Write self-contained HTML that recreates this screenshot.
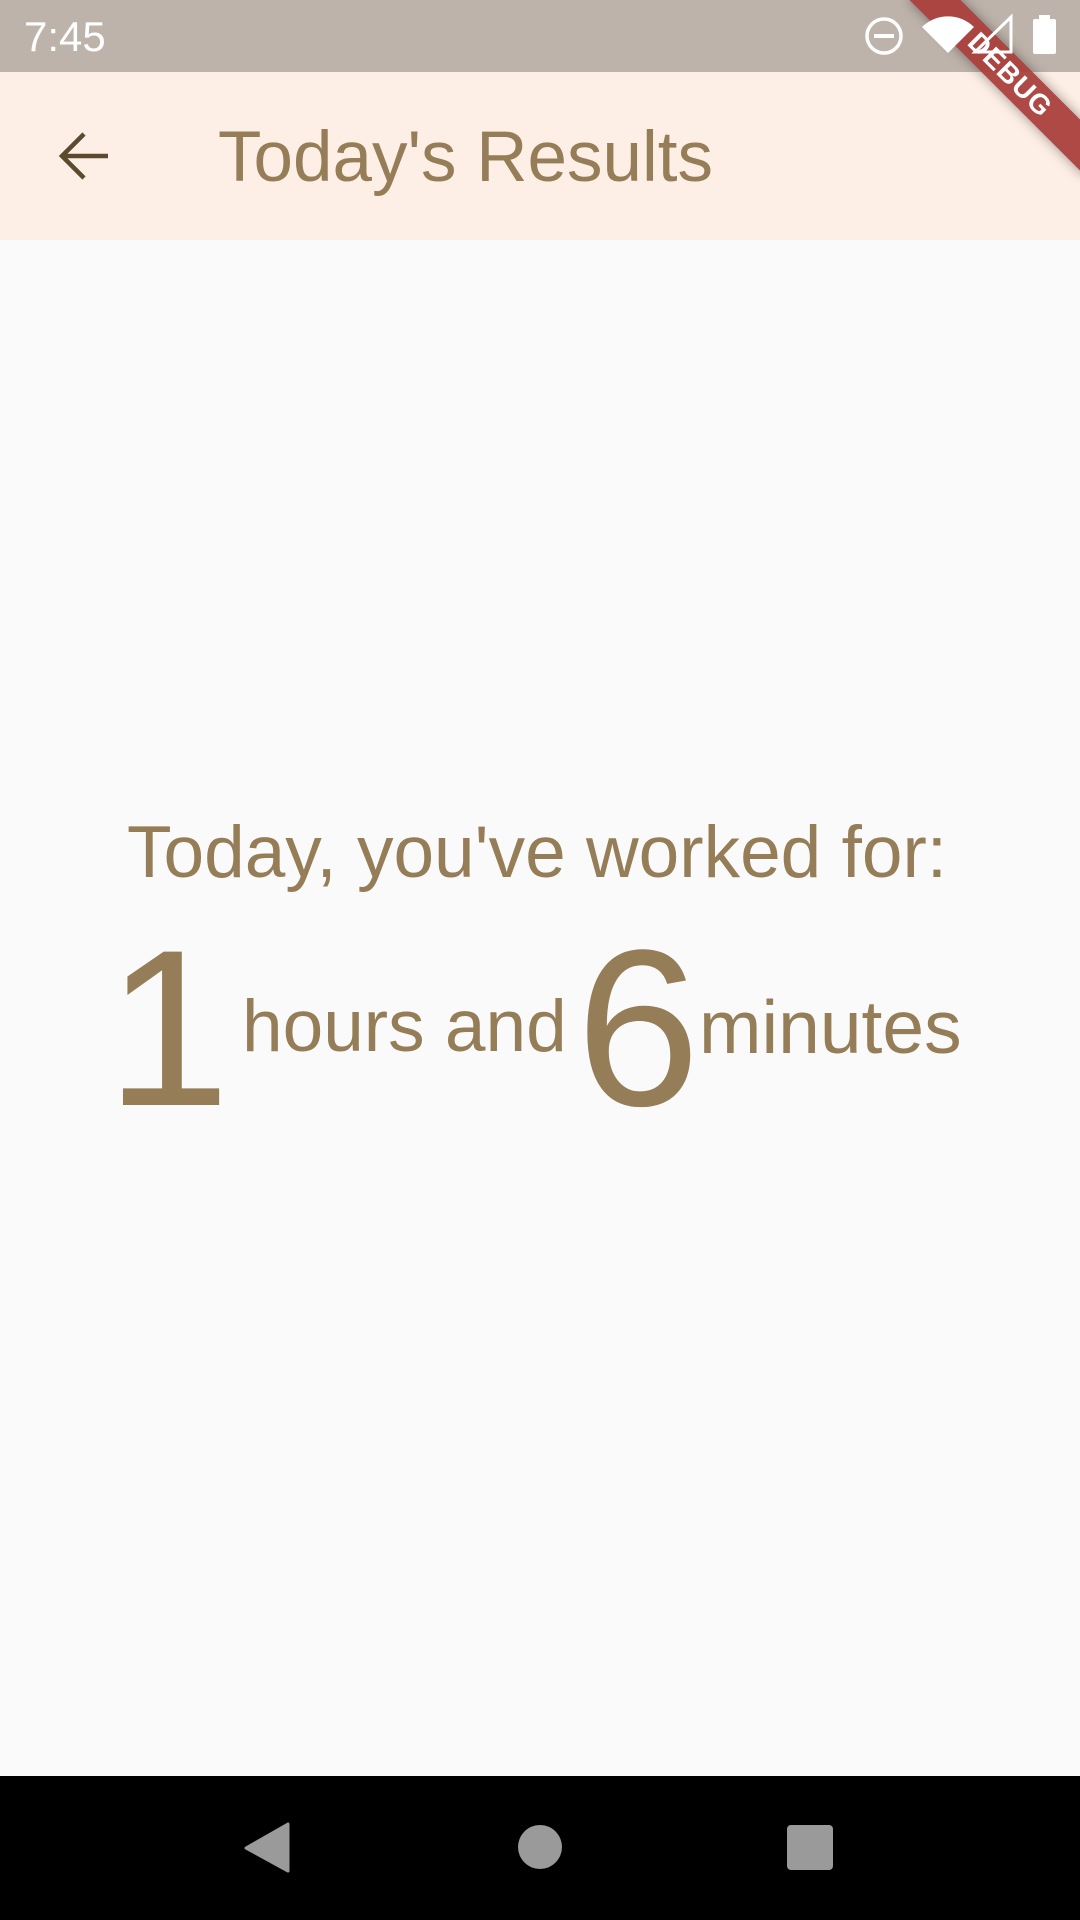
<!DOCTYPE html>
<html><head><meta charset="utf-8">
<style>
*{margin:0;padding:0;box-sizing:border-box}
html,body{width:1080px;height:1920px;overflow:hidden;background:#fafafa;font-family:"Liberation Sans",sans-serif}
.abs{position:absolute;white-space:nowrap;line-height:1}
.c{color:#957d57}
</style></head><body>
<div class="abs" style="left:0;top:0;width:1080px;height:72px;background:#beb3ab"></div>
<div class="abs" style="left:0;top:72px;width:1080px;height:168px;background:#fdefe5"></div>
<div class="abs" style="left:24px;top:16px;font-size:42px;color:#fff">7:45</div>
<div style="position:absolute;left:0;top:0;width:1080px;height:240px;overflow:hidden">
<div class="abs" style="left:885px;top:57px;width:250px;height:36px;background:rgba(168,60,58,.93);transform:rotate(45deg);box-shadow:0 0 12px rgba(0,0,0,.4);color:#fff;font-weight:bold;font-size:28px;text-align:center;line-height:36px;letter-spacing:1px">DEBUG</div>
</div>
<svg class="abs" style="left:0;top:0;z-index:2" width="1080" height="240">
 <circle cx="884" cy="36" r="17" fill="none" stroke="#fff" stroke-width="3.5"/>
 <rect x="874" y="34" width="20" height="4" fill="#fff"/>
 <path d="M948 53 L922 27 A37 37 0 0 1 974 27 Z" fill="#fff"/>
 <path d="M975 52 L1011 52 L1011 17 Z" fill="none" stroke="#fff" stroke-width="3"/>
 <rect x="1033" y="19" width="23" height="35" rx="2" fill="#fff"/>
 <rect x="1039" y="15" width="11" height="5" fill="#fff"/>
 <path d="M108 156 L64 156 M84 134 L62 156 L84 178" fill="none" stroke="#5b4a2e" stroke-width="4.5"/>
</svg>
<div class="abs c" style="left:218px;top:122px;font-size:71px">Today's Results</div>
<div class="abs c" style="left:127px;top:816px;font-size:73px">Today, you've worked for:</div>
<div class="abs c" style="left:106px;top:917px;font-size:223px">1</div>
<div class="abs c" style="left:242px;top:990px;font-size:73px">hours and</div>
<div class="abs c" style="left:576px;top:917px;font-size:223px">6</div>
<div class="abs c" style="left:699px;top:990px;font-size:75px">minutes</div>
<div class="abs" style="left:0;top:1776px;width:1080px;height:144px;background:#000"></div>
<svg class="abs" style="left:0;top:1776px" width="1080" height="144">
 <path d="M288 48 L288 95 L246 72 Z" fill="#9a9a9a" stroke="#9a9a9a" stroke-width="3" stroke-linejoin="round"/>
 <circle cx="540" cy="71" r="22" fill="#9a9a9a"/>
 <rect x="787" y="49" width="46" height="45" rx="4" fill="#9a9a9a"/>
</svg>
</body></html>
